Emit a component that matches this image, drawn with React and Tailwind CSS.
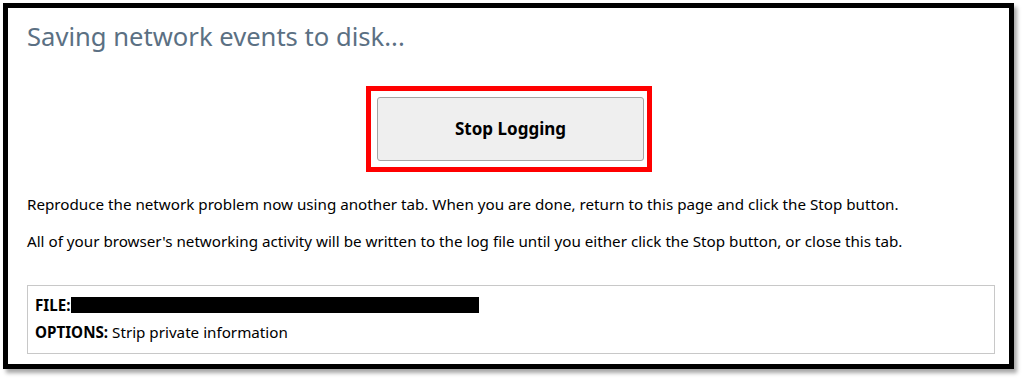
export default function App() {
  return (
    <div className="w-[1024px] h-[379px] bg-white pt-[3px] pl-[3px]" style={{ fontFamily: '"Noto Sans", "Open Sans", sans-serif' }}>
      <div className="w-[1011px] h-[366px] border-[5px] border-black bg-white shadow-[3px_4px_4px_rgba(0,0,0,0.35)] pl-[19px] pr-[15px] flex flex-col">
        <h1 className="text-[25.6px] leading-[26px] text-[#5b7083] mt-[16px]">Saving network events to disk...</h1>
        <div className="flex justify-center mt-[36px] mr-[3px]">
          <div className="border-[5px] border-[#ff0000] pl-[6px] pr-[3px] py-[6px]">
            <button className="w-[267px] h-[64px] bg-[#efefef] border border-[#a5a5a5] rounded-[3px] text-[17px] font-bold text-black">
              Stop Logging
            </button>
          </div>
        </div>
        <p className="text-[15.2px] text-black mt-[22px] leading-[20px]">
          Reproduce the network problem now using another tab. When you are done, return to this page and click the Stop button.
        </p>
        <p className="text-[15.2px] text-black mt-[17px] leading-[20px]">
          All of your browser's networking activity will be written to the log file until you either click the Stop button, or close this tab.
        </p>
        <div className="mt-[34px] w-[968px] h-[69px] border border-[#c8c8c8] pl-[7px] pt-[9px] text-[15.2px] leading-[20px] text-black">
          <div className="flex items-center">
            <span className="font-bold">FILE:</span>
            <span className="inline-block w-[408px] h-[16px] bg-black"></span>
          </div>
          <div className="mt-[7px]">
            <span className="font-bold">OPTIONS:</span> Strip private information
          </div>
        </div>
      </div>
    </div>
  );
}
